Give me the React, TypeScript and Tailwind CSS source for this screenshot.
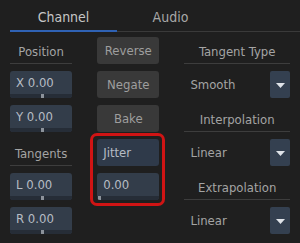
import React from "react";

const FONT = '"Liberation Sans Narrow", "DejaVu Sans Condensed", "Noto Sans", sans-serif';

function Label({ text }: { text: string }) {
  return (
    <div className="h-[27px] border-b border-[#3d3d3d] flex items-center justify-center pt-[4px] text-[13px] text-[#a4a4a4]">
      {text}
    </div>
  );
}

function Field({ text, handle }: { text: string; handle: number }) {
  return (
    <div className="h-[27px] rounded-[3px] bg-[#333d4a] flex flex-col overflow-hidden">
      <div className="flex-1 flex items-center px-[6px] text-[13px] text-[#b6bcc4]">{text}</div>
      <div className="h-[4px] bg-[#262d37] relative">
        <div className="absolute top-0 h-[4px] w-[3px] bg-[#8c929a]" style={{ left: handle }} />
      </div>
    </div>
  );
}

function Button({ text }: { text: string }) {
  return (
    <div className="h-[27px] rounded-[3px] bg-[#393939] flex items-center justify-center pt-[1px] text-[13px] text-[#9e9e9e]">
      {text}
    </div>
  );
}

function Dropdown({ text }: { text: string }) {
  return (
    <div className="h-[27px] flex">
      <div className="flex-1 flex items-center pl-[6px] text-[13px] text-[#a4a4a4]">{text}</div>
      <div className="w-[20px] rounded-[2px] bg-[#344050] flex items-center justify-center pt-[1px]">
        <svg width="9" height="5" viewBox="0 0 9 5">
          <path d="M0 0 L9 0 L4.5 5 Z" fill="#dfe3e8" />
        </svg>
      </div>
    </div>
  );
}

export default function App() {
  return (
    <div className="w-[300px] h-[243px] bg-[#1f1f1f] overflow-hidden" style={{ fontFamily: FONT }}>
      <div className="flex pl-[10px] h-[32px]">
        <div className="w-[107px] flex items-center justify-center pt-[4px] border-b-2 border-[#2f62b4] text-[14px] text-[#c6c6c6]">
          Channel
        </div>
        <div className="flex-1 flex border-b border-[#3a3a3a]">
          <div className="w-[107px] flex items-center justify-center pt-[4px] text-[14px] text-[#a8a8a8]">Audio</div>
        </div>
      </div>
      <div className="flex gap-[25px] px-[10px] pt-[5px]">
        <div className="w-[63px] flex flex-col gap-[7px]">
          <Label text="Position" />
          <Field text="X 0.00" handle={31} />
          <Field text="Y 0.00" handle={31} />
          <Label text="Tangents" />
          <Field text="L 0.00" handle={31} />
          <Field text="R 0.00" handle={31} />
        </div>
        <div className="w-[63px] flex flex-col gap-[7px]">
          <Button text="Reverse" />
          <Button text="Negate" />
          <Button text="Bake" />
          <div className="relative flex flex-col gap-[7px]">
            <div className="h-[27px] rounded-[3px] bg-[#2f3a4a] flex items-center px-[6px] text-[13px] text-[#b6bcc4]">
              Jitter
            </div>
            <Field text="0.00" handle={1} />
            <div className="absolute left-[-7px] right-[-6px] top-[-6px] bottom-[-6px] border-[3px] border-[#d01414] rounded-[7px] pointer-events-none" />
          </div>
        </div>
        <div className="w-[107px] flex flex-col gap-[7px]">
          <Label text="Tangent Type" />
          <Dropdown text="Smooth" />
          <Label text="Interpolation" />
          <Dropdown text="Linear" />
          <Label text="Extrapolation" />
          <Dropdown text="Linear" />
        </div>
      </div>
    </div>
  );
}
